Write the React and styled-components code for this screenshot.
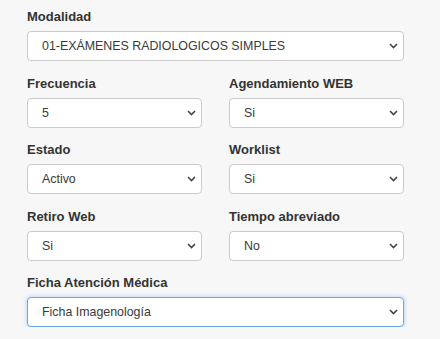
import React from 'react';
import styled, { createGlobalStyle } from 'styled-components';

const GlobalStyle = createGlobalStyle`
  body {
    margin: 0;
    background: #f7f7f7;
    font-family: "Liberation Sans", Arial, sans-serif;
  }
`;

const Form = styled.form`
  width: 377px;
  padding: 9px 0 0 27px;
  display: flex;
  flex-direction: column;
  gap: 14.5px;
`;

const Row = styled.div`
  display: grid;
  grid-template-columns: ${(p) => (p.$single ? '1fr' : '1fr 1fr')};
  column-gap: 27px;
`;

const Field = styled.div`
  display: flex;
  flex-direction: column;
`;

const Label = styled.label`
  font-size: 13px;
  line-height: 16px;
  font-weight: bold;
  color: #333;
  margin-bottom: 6px;
`;

const SelectWrap = styled.div`
  position: relative;
`;

const Select = styled.select`
  appearance: none;
  -webkit-appearance: none;
  width: 100%;
  height: 30px;
  box-sizing: border-box;
  padding: 0 24px 0 14px;
  font-family: "Liberation Sans", Arial, sans-serif;
  font-size: 12.4px;
  color: #3a3a3a;
  background: #fff;
  border: 1px solid ${(p) => (p.$focused ? '#66a6e6' : '#cbcbcb')};
  border-radius: 4px;
  box-shadow: ${(p) => (p.$focused ? '0 0 4px rgba(102, 166, 230, 0.55)' : 'none')};
  outline: none;
`;

const Chevron = styled.svg`
  position: absolute;
  right: 6px;
  top: 12px;
  width: 9px;
  height: 6px;
  pointer-events: none;
`;

function Dropdown({ label, value, options, focused }) {
  return (
    <Field>
      <Label>{label}</Label>
      <SelectWrap>
        <Select defaultValue={value} $focused={focused}>
          {(options || [value]).map((o) => (
            <option key={o}>{o}</option>
          ))}
        </Select>
        <Chevron viewBox="0 0 9 6">
          <path d="M1 1l3.5 3.5L8 1" fill="none" stroke="#444" strokeWidth="1.6" />
        </Chevron>
      </SelectWrap>
    </Field>
  );
}

export default function App() {
  return (
    <>
      <GlobalStyle />
      <Form>
        <Row $single>
          <Dropdown label="Modalidad" value="01-EXÁMENES RADIOLOGICOS SIMPLES" />
        </Row>
        <Row>
          <Dropdown label="Frecuencia" value="5" />
          <Dropdown label="Agendamiento WEB" value="Si" options={['Si', 'No']} />
        </Row>
        <Row>
          <Dropdown label="Estado" value="Activo" options={['Activo', 'Inactivo']} />
          <Dropdown label="Worklist" value="Si" options={['Si', 'No']} />
        </Row>
        <Row>
          <Dropdown label="Retiro Web" value="Si" options={['Si', 'No']} />
          <Dropdown label="Tiempo abreviado" value="No" options={['Si', 'No']} />
        </Row>
        <Row $single>
          <Dropdown label="Ficha Atención Médica" value="Ficha Imagenología" focused />
        </Row>
      </Form>
    </>
  );
}
